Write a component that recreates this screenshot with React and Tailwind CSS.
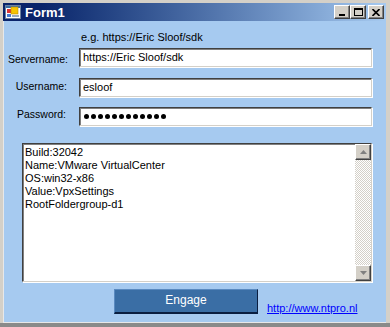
const lines = [
  "Build:32042",
  "Name:VMware VirtualCenter",
  "OS:win32-x86",
  "Value:VpxSettings",
  "RootFoldergroup-d1",
];

const sunken =
  "border-t-[#404040] border-l-[#404040] border-b-[#d4d0c8] border-r-[#d4d0c8] border shadow-[inset_1px_1px_0_#808080,1px_1px_0_#ffffff]";
const raised =
  "bg-[#d4d0c8] border border-t-white border-l-white border-b-[#404040] border-r-[#404040] shadow-[inset_-1px_-1px_0_#808080]";

function FormIcon() {
  return (
    <svg width="16" height="16" viewBox="0 0 16 16">
      <rect x="0.5" y="1.5" width="15" height="13" fill="#fff" stroke="#6b7f9e" />
      <rect x="1" y="2" width="14" height="2" fill="#3a6ea5" />
      <rect x="2" y="5" width="4" height="4" fill="#d33" />
      <rect x="6" y="3" width="7" height="7" fill="#f6c400" stroke="#c08a00" strokeWidth="0.6" />
      <rect x="2" y="10" width="4" height="3" fill="#4a7bd0" />
      <rect x="7" y="11" width="7" height="2" fill="#9ab" />
    </svg>
  );
}

function TitleButton({ children }) {
  return (
    <div className={`w-[16px] h-[14px] flex items-center justify-center ${raised}`}>
      {children}
    </div>
  );
}

function Arrow({ up }) {
  return (
    <svg width="7" height="4" viewBox="0 0 7 4">
      <path d={up ? "M3.5 0 L7 4 L0 4 Z" : "M0 0 L7 0 L3.5 4 Z"} fill="#808080" />
    </svg>
  );
}

export default function App() {
  return (
    <div
      className="w-[390px] h-[327px] bg-[#d4d0c8] pl-[3px] pr-[4px] pt-[3px] flex flex-col text-black"
      style={{ fontFamily: '"Liberation Sans", Arial, sans-serif' }}
    >
      {/* Title bar */}
      <div className="h-[18px] flex items-center bg-gradient-to-r from-[#0a246a] from-10% to-[#a6caf0] pl-[2px] pr-[2px]">
        <FormIcon />
        <span className="ml-[4px] text-white font-bold text-[13px] leading-none">Form1</span>
        <div className="ml-auto flex items-center">
          <TitleButton>
            <div className="w-[6px] h-[2px] bg-black mt-[6px] -ml-[1px]" />
          </TitleButton>
          <TitleButton>
            <div className="w-[9px] h-[8px] border border-black border-t-2" />
          </TitleButton>
          <div className="ml-[2px]">
            <TitleButton>
              <svg width="8" height="7" viewBox="0 0 8 7">
                <path d="M0.5 0 L7.5 7 M7.5 0 L0.5 7" stroke="#000" strokeWidth="1.6" />
              </svg>
            </TitleButton>
          </div>
        </div>
      </div>

      {/* Body */}
      <div className="flex-1 bg-[#a6caf0] text-[11px] flex flex-col border-l border-l-[#e8e8e8]">
        <div className="pl-[77px] pt-[10px] h-[26px] leading-[13px]">e.g. https://Eric Sloof/sdk</div>

        <div className="grid grid-cols-[65px_293px] gap-x-[10px] items-center">
          <div className="text-right pr-px text-[10.5px] translate-y-[3px]">Servername:</div>
          <div className={`h-[19px] bg-white flex items-center pl-[3px] mt-px ${sunken}`}>
            https://Eric Sloof/sdk
          </div>

          <div className="text-right pr-[2px] text-[10.5px] mt-[11px] -translate-y-px">Username:</div>
          <div className={`h-[19px] bg-white flex items-center pl-[3px] mt-[11px] ${sunken}`}>esloof</div>

          <div className="text-right pr-[3px] text-[10.5px] mt-[10px] -translate-y-[2px]">Password:</div>
          <div className={`h-[19px] bg-white flex items-center pl-[4px] gap-[2px] mt-[10px] ${sunken}`}>
            {Array.from({ length: 12 }).map((_, i) => (
              <span key={i} className="w-[5px] h-[5px] rounded-full bg-black" />
            ))}
          </div>
        </div>

        {/* Output box */}
        <div className={`ml-[18px] mt-[17px] w-[350px] h-[139px] bg-white flex ${sunken}`}>
          <div className="flex-1 pl-[2px] pt-[2px] leading-[13px]">
            {lines.map((l) => (
              <div key={l}>{l}</div>
            ))}
          </div>
          <div className="w-[16px] flex flex-col bg-[repeating-conic-gradient(#d4d0c8_0_25%,#ffffff_0_50%)] bg-[length:2px_2px]">
            <div className={`h-[16px] flex items-center justify-center ${raised}`}>
              <Arrow up />
            </div>
            <div className="flex-1" />
            <div className={`h-[16px] flex items-center justify-center ${raised}`}>
              <Arrow />
            </div>
          </div>
        </div>

        {/* Bottom row */}
        <div className="flex items-end mt-[7px]">
          <button className="ml-[110px] w-[144px] h-[25px] bg-[#3a6ea5] border border-t-[#5a8ac0] border-l-[#5a8ac0] border-b-[#0a1e40] border-r-[#0a1e40] border-b-2 text-white text-[12px] leading-none pb-[2px]">
            Engage
          </button>
          <a href="#" className="ml-[9px] mb-[-1px] text-[#0000ff] underline text-[11px] leading-[13px]">
            http://www.ntpro.nl
          </a>
        </div>
        <div className="flex-1" />
        <div className="h-px bg-[#e8e8e8]" />
      </div>
      <div className="h-[4px] bg-[#8a8a8a] -mx-[3px] -mr-[4px]" />
    </div>
  );
}
